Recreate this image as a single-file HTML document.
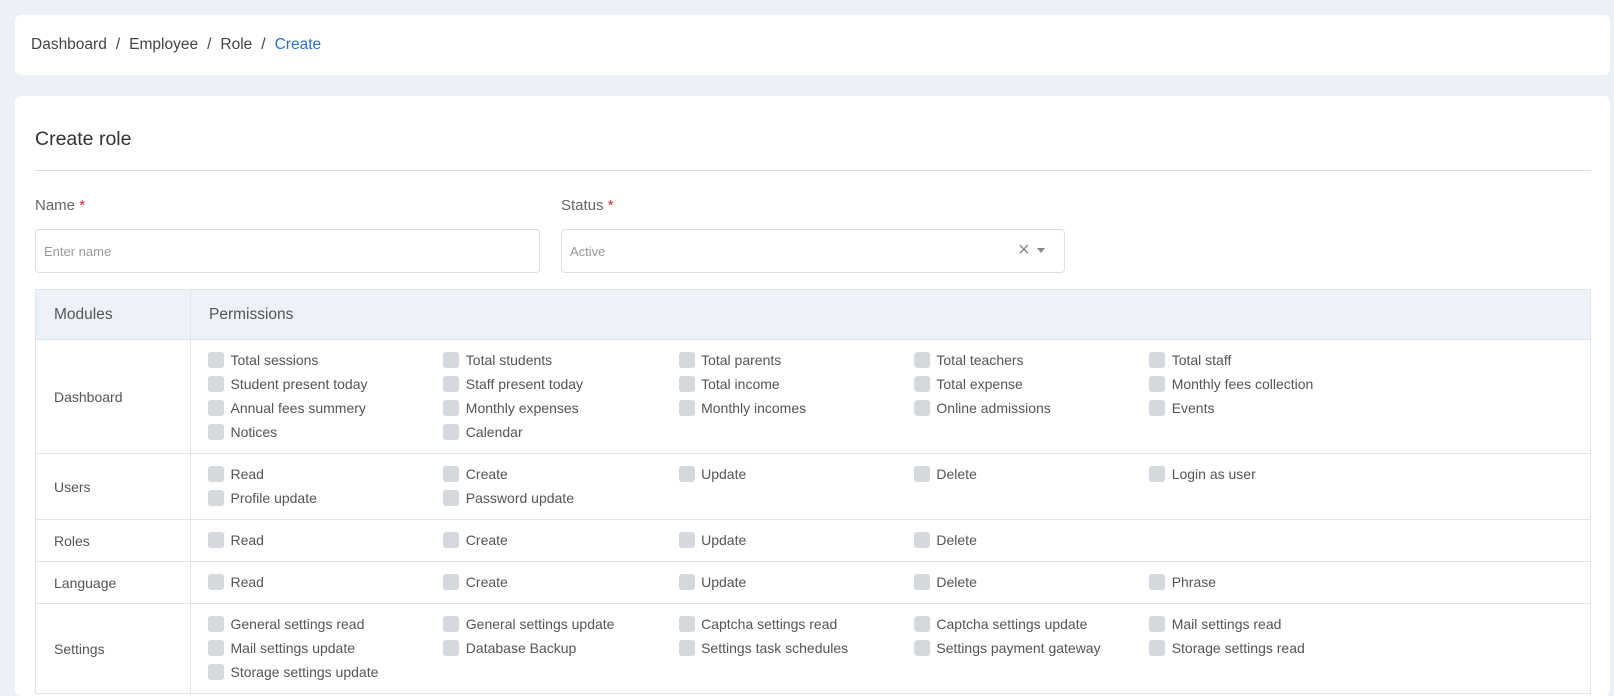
<!DOCTYPE html>
<html><head><style>
*{box-sizing:border-box;margin:0;padding:0}
body{width:1614px;height:668px;overflow:hidden;background:#edf1f7;font-family:"Liberation Sans",Arial,sans-serif;color:#555;position:relative}
.card{position:absolute;background:#fff;border-radius:6px}
.bc{left:15px;top:15px;width:1595px;height:60px;font-size:15.5px;color:#444;padding:21px 0 0 16px}
.bc span.sep{margin:0 9px}
.bc .act{color:#2a6fd6}
.main{left:15px;top:96px;width:1595px;height:600px}
h2{position:absolute;left:20px;top:32px;font-size:19.5px;font-weight:normal;color:#333}
.div{position:absolute;left:20px;top:74px;width:1556px;height:1px;background:#dde1e6}
.lbl{position:absolute;top:101px;font-size:15px;color:#666}
.lbl b{color:#d23;font-weight:normal}
.inp{position:absolute;top:133px;height:44px;border:1px solid #dcdfe4;border-radius:4px;font-size:13px;color:#999;padding:14px 8px}
table{position:absolute;left:20px;top:193px;width:1556px;border-collapse:collapse;font-size:14px;color:#555}
td,th{border:1px solid #e1e5ea;vertical-align:middle;text-align:left}
th{background:#edf2f9;height:50px;font-weight:normal;font-size:15.5px;color:#555;padding-left:18px}
td.m{width:155px;padding-left:18px}
td.p{padding:8px 0 9px 17px}
.g{display:grid;grid-template-columns:repeat(5,235.3px)}
.i{height:24px;line-height:24px;display:flex;align-items:center;white-space:nowrap}
.i:before{content:"";width:16px;height:16px;border-radius:3px;background:#d5d8dc;margin-right:6.5px;flex:none}
</style></head><body>
<div class="card bc">Dashboard<span class="sep">/</span>Employee<span class="sep">/</span>Role<span class="sep">/</span><span class="act">Create</span></div>
<div class="card main">
<h2>Create role</h2>
<div class="div"></div>
<div class="lbl" style="left:20px">Name <b>*</b></div>
<div class="lbl" style="left:546px">Status <b>*</b></div>
<div class="inp" style="left:20px;width:505px">Enter name</div>
<div class="inp" style="left:546px;width:504px">Active
<span style="position:absolute;left:456px;top:9px;font-size:20px;color:#888">×</span>
<span style="position:absolute;left:475px;top:18px;border-left:4px solid transparent;border-right:4px solid transparent;border-top:5px solid #888"></span></div>
<table>
<tr><th style="width:155px">Modules</th><th>Permissions</th></tr>
<tr><td class="m">Dashboard</td><td class="p"><div class="g">
<div class="i">Total sessions</div><div class="i">Total students</div><div class="i">Total parents</div><div class="i">Total teachers</div><div class="i">Total staff</div>
<div class="i">Student present today</div><div class="i">Staff present today</div><div class="i">Total income</div><div class="i">Total expense</div><div class="i">Monthly fees collection</div>
<div class="i">Annual fees summery</div><div class="i">Monthly expenses</div><div class="i">Monthly incomes</div><div class="i">Online admissions</div><div class="i">Events</div>
<div class="i">Notices</div><div class="i">Calendar</div></div></td></tr>
<tr><td class="m">Users</td><td class="p"><div class="g">
<div class="i">Read</div><div class="i">Create</div><div class="i">Update</div><div class="i">Delete</div><div class="i">Login as user</div>
<div class="i">Profile update</div><div class="i">Password update</div></div></td></tr>
<tr><td class="m">Roles</td><td class="p"><div class="g">
<div class="i">Read</div><div class="i">Create</div><div class="i">Update</div><div class="i">Delete</div></div></td></tr>
<tr><td class="m">Language</td><td class="p"><div class="g">
<div class="i">Read</div><div class="i">Create</div><div class="i">Update</div><div class="i">Delete</div><div class="i">Phrase</div></div></td></tr>
<tr><td class="m">Settings</td><td class="p"><div class="g">
<div class="i">General settings read</div><div class="i">General settings update</div><div class="i">Captcha settings read</div><div class="i">Captcha settings update</div><div class="i">Mail settings read</div>
<div class="i">Mail settings update</div><div class="i">Database Backup</div><div class="i">Settings task schedules</div><div class="i">Settings payment gateway</div><div class="i">Storage settings read</div>
<div class="i">Storage settings update</div></div></td></tr>
</table>
</div>
</body></html>
